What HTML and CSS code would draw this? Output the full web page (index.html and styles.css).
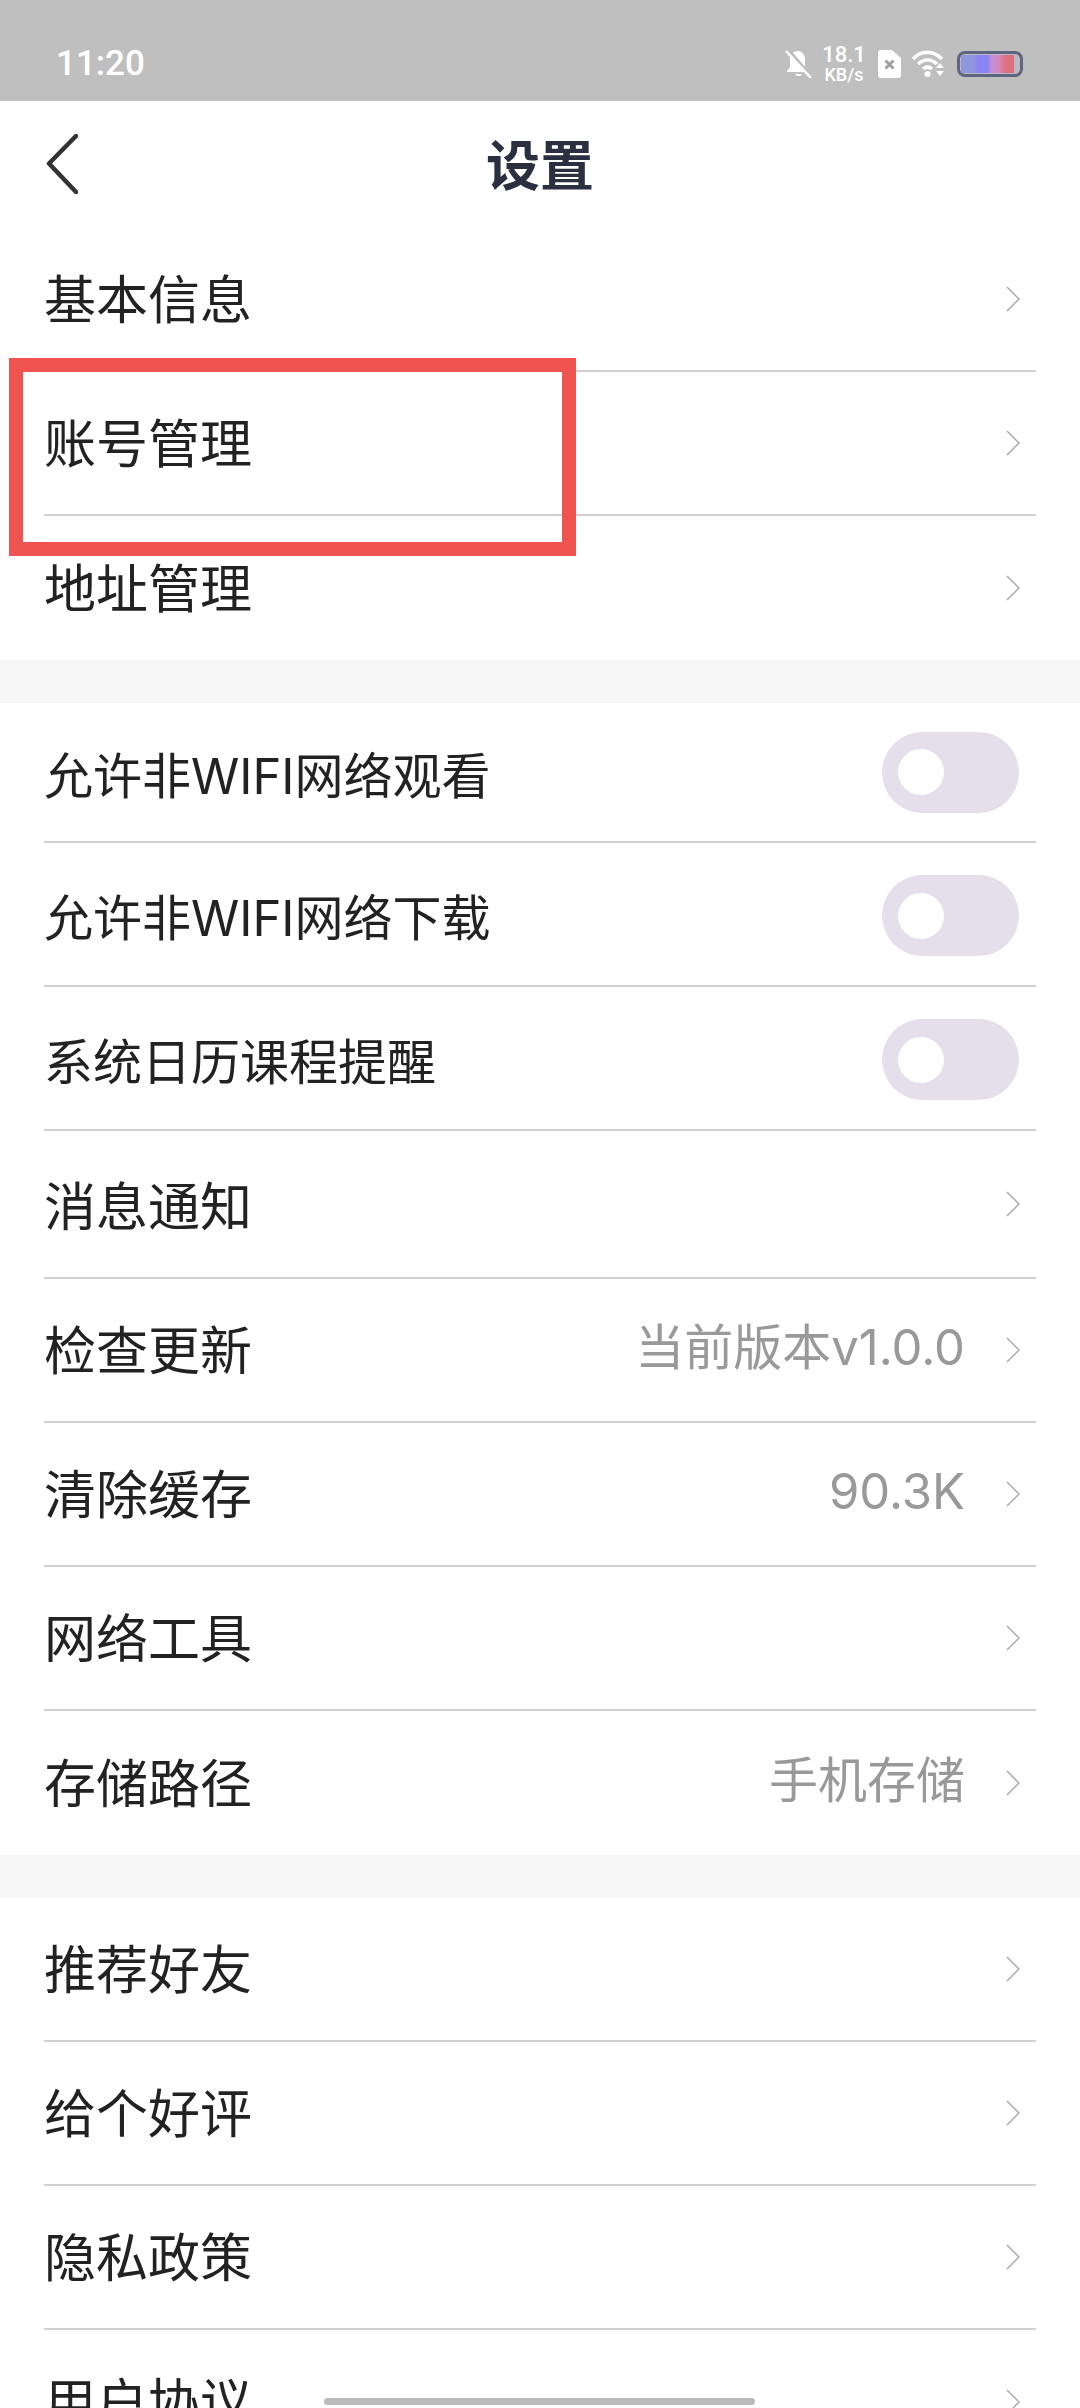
FILE: index.html
```html
<!DOCTYPE html>
<html lang="zh-CN">
<head>
  <meta charset="UTF-8">
  <title>设置</title>
  <link rel="stylesheet" href="styles.css">
</head>
<body>
  <div class="phone">

    <!-- STATUS BAR -->
    <div class="status-bar">
      <span class="time">11:20</span>
      <div class="status-icons">
        <svg class="ic-bell" width="28" height="28" viewBox="0 0 28 28">
          <path d="M13 1c-5 0-8 4-8 9v7l-3 4v1h20v-1l-2-3V9c0-4-3-8-7-8z" fill="#fff"/>
          <path d="M10 24c1 2.500 6 2.500 7 0z" fill="#fff"/>
          <path d="M3 0l24 28" stroke="#bfbfbf" stroke-width="4"/>
          <path d="M1 1l25 27" stroke="#fff" stroke-width="2.500"/>
        </svg>
        <div class="speed">
          <span class="speed-num">18.1</span>
          <span class="speed-unit">KB/s</span>
        </div>
        <svg class="ic-sim" width="23" height="28" viewBox="0 0 23 28">
          <path d="M3 0h11l9 8v17a3 3 0 0 1-3 3H3a3 3 0 0 1-3-3V3a3 3 0 0 1 3-3z" fill="#fff"/>
          <path d="M7.500 10.500l8 8M15.500 10.500l-8 8" stroke="#a0a0a0" stroke-width="3"/>
        </svg>
        <svg class="ic-wifi" width="33" height="27" viewBox="0 0 33 27">
          <g fill="none" stroke="#fff" stroke-width="3.500">
            <path d="M1 9c8-9 20-9 29 0"/>
            <path d="M6 14c6-5.500 13-5.500 19 0"/>
            <path d="M11 19c3-2.500 6-2.500 9 0"/>
          </g>
          <circle cx="15.500" cy="24" r="3" fill="#fff"/>
          <path d="M28 13l4 5h-8zM24 21h8l-4 5z" fill="#fff"/>
        </svg>
        <div class="battery"><div class="battery-fill"></div></div>
      </div>
    </div>

    <!-- HEADER -->
    <header class="top-bar">
      <a class="back" href="#">
        <svg width="32" height="60" viewBox="0 0 32 60">
          <path d="M30 2L3 29.500 30 58" fill="none" stroke="#333" stroke-width="4.500" stroke-linecap="round" stroke-linejoin="round"/>
        </svg>
      </a>
      <h1 class="page-title">设置</h1>
    </header>

    <!-- GROUPE 1 -->
    <ul class="group">
      <li class="row"><span class="label">基本信息</span><svg class="chev" width="14" height="26" viewBox="0 0 14 26"><path d="M1 1l12 12L1 25"/></svg></li>
      <li class="row"><span class="label">账号管理</span><svg class="chev" width="14" height="26" viewBox="0 0 14 26"><path d="M1 1l12 12L1 25"/></svg></li>
      <li class="row"><span class="label">地址管理</span><svg class="chev" width="14" height="26" viewBox="0 0 14 26"><path d="M1 1l12 12L1 25"/></svg></li>
    </ul>

    <!-- GROUPE 2 -->
    <ul class="group">
      <li class="row row-toggle"><span class="label label-small">允许非WIFI网络观看</span><div class="toggle"><div class="knob"></div></div></li>
      <li class="row row-toggle"><span class="label label-small">允许非WIFI网络下载</span><div class="toggle"><div class="knob"></div></div></li>
      <li class="row row-toggle"><span class="label label-small">系统日历课程提醒</span><div class="toggle"><div class="knob"></div></div></li>
      <li class="row row-tall"><span class="label">消息通知</span><svg class="chev" width="14" height="26" viewBox="0 0 14 26"><path d="M1 1l12 12L1 25"/></svg></li>
      <li class="row"><span class="label">检查更新</span><span class="value">当前版本v1.0.0</span><svg class="chev" width="14" height="26" viewBox="0 0 14 26"><path d="M1 1l12 12L1 25"/></svg></li>
      <li class="row"><span class="label">清除缓存</span><span class="value">90.3K</span><svg class="chev" width="14" height="26" viewBox="0 0 14 26"><path d="M1 1l12 12L1 25"/></svg></li>
      <li class="row"><span class="label">网络工具</span><svg class="chev" width="14" height="26" viewBox="0 0 14 26"><path d="M1 1l12 12L1 25"/></svg></li>
      <li class="row"><span class="label">存储路径</span><span class="value">手机存储</span><svg class="chev" width="14" height="26" viewBox="0 0 14 26"><path d="M1 1l12 12L1 25"/></svg></li>
    </ul>

    <!-- GROUPE 3 -->
    <ul class="group">
      <li class="row"><span class="label">推荐好友</span><svg class="chev" width="14" height="26" viewBox="0 0 14 26"><path d="M1 1l12 12L1 25"/></svg></li>
      <li class="row"><span class="label">给个好评</span><svg class="chev" width="14" height="26" viewBox="0 0 14 26"><path d="M1 1l12 12L1 25"/></svg></li>
      <li class="row"><span class="label">隐私政策</span><svg class="chev" width="14" height="26" viewBox="0 0 14 26"><path d="M1 1l12 12L1 25"/></svg></li>
      <li class="row"><span class="label">用户协议</span><svg class="chev" width="14" height="26" viewBox="0 0 14 26"><path d="M1 1l12 12L1 25"/></svg></li>
    </ul>

    <!-- OVERLAYS -->
    <div class="highlight"></div>
    <div class="home-bar"></div>
  </div>
</body>
</html>
```

FILE: styles.css
```css
/* ---------- BASE ---------- */
* {
  margin: 0;
  padding: 0;
  box-sizing: border-box;
  font-family: "Noto Sans CJK SC", "Noto Sans", sans-serif;
}
html, body {
  height: 2408px;
  overflow: hidden;
  background: #fff;
}
ul {
  list-style: none;
}
.phone {
  position: relative;
  width: 1080px;
  height: 2408px;
  overflow: hidden;
  background: #f6f6f6;
}

/* ---------- STATUS BAR ---------- */
.status-bar {
  height: 101px;
  background: #bfbfbf;
  display: flex;
  align-items: center;
  justify-content: space-between;
  padding: 26px 57px 0 56px;
}
.time {
  font-family: Roboto, sans-serif;
  font-size: 35px;
  font-weight: 500;
  color: #fff;
}
.status-icons {
  display: flex;
  align-items: center;
}
.ic-bell {
  margin-right: 12px;
}
.speed {
  display: flex;
  flex-direction: column;
  align-items: center;
  width: 38px;
  margin-right: 15px;
  color: #fff;
  font-weight: 500;
}
.speed-num {
  font-family: Roboto, sans-serif;
  font-size: 22px;
  line-height: 22px;
}
.speed-unit {
  font-family: Roboto, sans-serif;
  font-size: 18px;
  line-height: 18px;
}
.ic-sim {
  margin-right: 11px;
}
.ic-wifi {
  margin-right: 12px;
}
.battery {
  width: 66px;
  height: 26px;
  border: 3px solid #5f6580;
  border-radius: 8px;
  background: #b9b9c2;
  padding: 1px;
}
.battery-fill {
  width: 92%;
  height: 100%;
  background: linear-gradient(to right, #8f97dd 0%, #8f97dd 22%, #8a85f2 32%, #8a85f2 50%, #c48fd6 58%, #d58ab9 72%, #dd6f7f 84%, #dd6f7f 100%);
}

/* ---------- HEADER ---------- */
.top-bar {
  position: relative;
  height: 127px;
  background: #fff;
  display: flex;
  align-items: center;
  justify-content: center;
}
.back {
  position: absolute;
  left: 46px;
  top: 33px;
  display: block;
  line-height: 0;
}
.page-title {
  font-size: 54px;
  font-weight: 700;
  color: #2a3040;
  line-height: 1;
  margin-top: -3px;
}

/* ---------- LISTE ---------- */
.group {
  background: #fff;
  padding: 0 44px;
  margin-bottom: 43px;
}
.row {
  height: 144px;
  display: flex;
  align-items: center;
  border-bottom: 2px solid #d0d0d0;
}
.row:last-child {
  border-bottom: none;
}
.row-toggle:first-child {
  height: 140px;
}
.row-toggle + .row-toggle .toggle {
  margin-top: 3px;
}
.row-tall {
  height: 148px;
}
.label {
  flex: 1;
  font-size: 52px;
  font-weight: 400;
  color: #222;
  line-height: 1;
  padding-bottom: 5px;
}
.row-tall .label {
  padding-bottom: 0;
}
.label-small {
  font-family: Inter, "Noto Sans CJK SC", sans-serif;
  font-size: 49px;
  padding-top: 9px;
  padding-bottom: 0;
}
.value {
  font-family: Inter, "Noto Sans CJK SC", sans-serif;
  font-size: 49px;
  color: #999;
  line-height: 1;
  margin-right: 41px;
  padding-bottom: 5px;
}
.chev {
  margin-right: 16px;
  fill: none;
  stroke: #aaa;
  stroke-width: 1.5;
}

/* ---------- TOGGLE ---------- */
.toggle {
  width: 137px;
  height: 81px;
  margin-right: 17px;
  border-radius: 41px;
  background: #e4dfea;
  display: flex;
  align-items: center;
  padding-left: 16px;
}
.knob {
  width: 46px;
  height: 46px;
  border-radius: 50%;
  background: #fff;
}

/* ---------- OVERLAYS ---------- */
.highlight {
  position: absolute;
  left: 9px;
  top: 358px;
  width: 567px;
  height: 198px;
  border: 14px solid #ef5350;
}
.home-bar {
  position: absolute;
  left: 324px;
  top: 2398px;
  width: 431px;
  height: 7px;
  border-radius: 4px;
  background: #bbb;
}
```
